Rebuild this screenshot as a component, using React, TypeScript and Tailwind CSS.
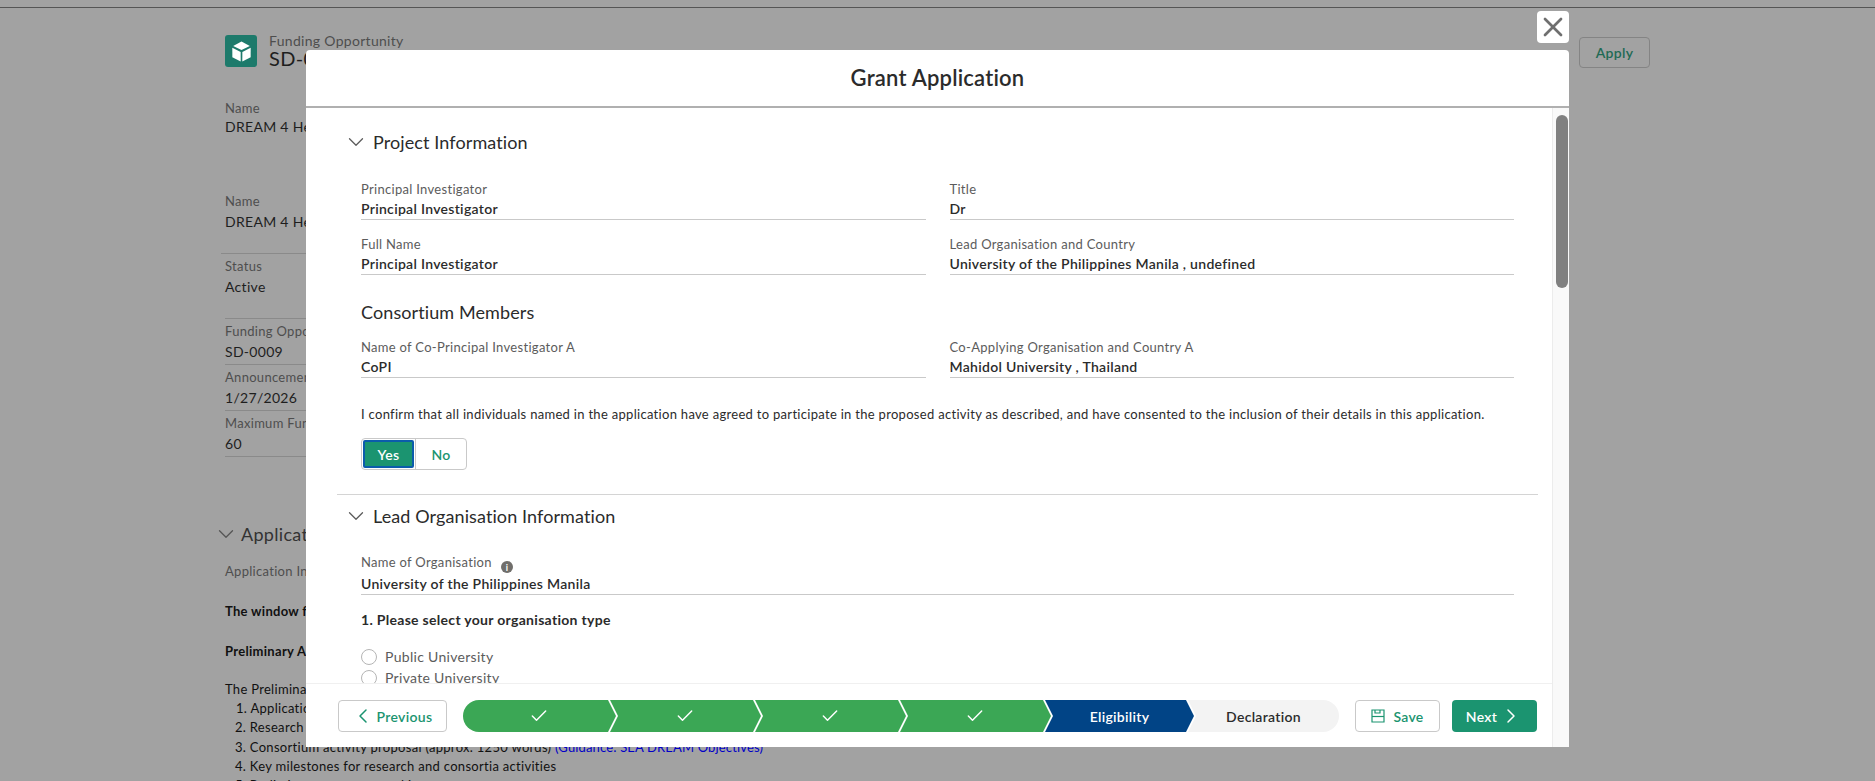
import { Check, ChevronDown, ChevronLeft, ChevronRight, X } from "lucide-react";

const font = "font-['Lato','Liberation_Sans',sans-serif]";

const stepNotch =
  "[clip-path:polygon(0_0,calc(100%-8px)_0,100%_50%,calc(100%-8px)_100%,0_100%,8px_50%)]";

function BgField({ label, value, className }: { label: string; value: string; className: string }) {
  return (
    <div className={`w-[400px] border-b border-[#8a8a8a] pt-[4px] ${className}`}>
      <div className="text-[13px] leading-[16px] text-[#4e4e4e]">{label}</div>
      <div className="mt-[3px] text-[14px] leading-[20px] text-[#1e1e1e]">{value}</div>
    </div>
  );
}

function Background() {
  return (
    <div className="pl-[225px] text-[#1e1e1e]">
      <div className="flex w-[1425px] items-start justify-between pt-[27px]">
        <div className="flex">
          <div className="flex h-[32px] w-[32px] items-center justify-center rounded-[3px] bg-[#1d7a6b]">
            <CubeIcon />
          </div>
          <div className="ml-[12px] -mt-[1px]">
            <div className="text-[14px] leading-[13px] text-[#4e4e4e]">Funding Opportunity</div>
            <div className="text-[20px] leading-[22px]">SD-0009</div>
          </div>
        </div>
        <button className="mt-[2px] h-[31px] w-[71px] rounded-[4px] border border-[#848484] text-[14px] font-semibold text-[#1f6a54]">
          Apply
        </button>
      </div>
      <div className="mt-[31px] text-[13px] leading-[16px] text-[#4e4e4e]">Name</div>
      <div className="mt-[1px] text-[14px] leading-[20px]">DREAM 4 Health</div>
      <div className="mt-[56px] text-[13px] leading-[16px] text-[#4e4e4e]">Name</div>
      <div className="mt-[3px] text-[14px] leading-[20px]">DREAM 4 Health</div>
      <div className="-ml-[4px] mt-[21px] w-[400px] border-t border-[#8a8a8a]" />
      <BgField label="Status" value="Active" className="pb-[21px]" />
      <BgField label="Funding Opportunity" value="SD-0009" className="pb-[2px]" />
      <BgField label="Announcement Date" value="1/27/2026" className="pb-[2px]" />
      <BgField label="Maximum Funding" value="60" className="pb-[2px]" />
      <div className="-ml-[12px] mt-[64px] flex items-center text-[18px] leading-[24px] text-[#333]">
        <ChevronDown className="h-[26px] w-[26px] shrink-0 text-[#555]" strokeWidth={1.2} />
        <span className="ml-[2px]">Application Details</span>
      </div>
      <div className="mt-[16px] text-[13px] leading-[16px] text-[#4e4e4e]">Application Instructions</div>
      <div className="mt-[22px] text-[13px] font-bold leading-[20px] text-[#111]">The window for applications</div>
      <div className="mt-[20px] text-[13px] font-bold leading-[20px] text-[#111]">Preliminary Application</div>
      <div className="mt-[18px] text-[13px] leading-[20px] text-[#111]">The Preliminary Application</div>
      <ol className="text-[13px] leading-[19.3px] text-[#111]">
        <li className="pl-[11px]">1. Application form</li>
        <li className="pl-[10px]">2. Research proposal</li>
        <li className="pl-[10px]">
          3. Consortium activity proposal (approx. 1250 words){" "}
          <span className="tracking-[0.15px] text-[#0000c8]">(Guidance: SEA DREAM Objectives)</span>
        </li>
        <li className="pl-[10px]">4. Key milestones for research and consortia activities</li>
        <li className="pl-[10px]">5. Preliminary outcomes and impact</li>
      </ol>
    </div>
  );
}

function CubeIcon() {
  return (
    <svg viewBox="0 0 24 24" className="h-[25px] w-[25px]" fill="#fff">
      <path d="M12 2.5 20 6.6 12 10.6 4 6.6Z" />
      <path d="M3.2 8.4 11.2 12.4V21.5L3.2 17.4Z" />
      <path d="M20.8 8.4 12.8 12.4V21.5L20.8 17.4Z" />
    </svg>
  );
}

function Field({ label, value, info }: { label: string; value: string; info?: boolean }) {
  return (
    <div className="border-b border-[#c9c9c9]">
      <div className={`flex text-[13px] leading-[16px] text-[#5c5c5c] ${info ? "h-[18px]" : ""}`}>
        {label}
        {info && (
          <span className="ml-[9px] mt-[7px] flex h-[12px] w-[12px] items-center justify-center rounded-full bg-[#706e6b] text-[9px] font-bold leading-none tracking-normal text-white">
            i
          </span>
        )}
      </div>
      <div className="whitespace-pre pt-[2px] text-[14px] font-semibold leading-[20px] text-[#2b2b2b]">{value}</div>
    </div>
  );
}

function SectionTitle({ children }: { children: string }) {
  return (
    <div className="flex h-[24px] items-center">
      <ChevronDown className="ml-[6px] h-[26px] w-[26px] shrink-0 text-[#5c5c5c]" strokeWidth={1.2} />
      <span className="ml-[4px] text-[18px] leading-[24px] tracking-[0.1px] text-[#2b2b2b]">{children}</span>
    </div>
  );
}

function Radio({ label }: { label: string }) {
  return (
    <div className="flex h-[21px] items-start">
      <span className="h-[16px] w-[16px] rounded-full border border-[#b5b5b5] bg-white" />
      <span className="ml-[8px] text-[14px] leading-[16px] text-[#5c5c5c]">{label}</span>
    </div>
  );
}

function Stepper() {
  return (
    <div className="flex h-[32px] w-[876px]">
      <div className="flex w-[153px] items-center justify-center rounded-l-full bg-[#3ba755] [clip-path:polygon(0_0,calc(100%-8px)_0,100%_50%,calc(100%-8px)_100%,0_100%)]">
        <Check className="-ml-[2px] h-[20px] w-[20px] text-white" strokeWidth={1.75} />
      </div>
      {[0, 1, 2].map((i) => (
        <div key={i} className={`-ml-[6px] flex w-[151px] items-center justify-center bg-[#3ba755] ${stepNotch}`}>
          <Check className="-ml-[2px] h-[20px] w-[20px] text-white" strokeWidth={1.75} />
        </div>
      ))}
      <div className={`-ml-[6px] flex w-[149px] items-center justify-center bg-[#014486] text-[14px] font-semibold text-white ${stepNotch}`}>
        Eligibility
      </div>
      <div className="-ml-[6px] flex flex-1 items-center justify-center rounded-r-full bg-[#f3f3f3] text-[14px] font-semibold text-[#2b2b2b] [clip-path:polygon(0_0,100%_0,100%_100%,0_100%,8px_50%)]">
        Declaration
      </div>
    </div>
  );
}

function Footer() {
  return (
    <div className="flex h-[64px] items-start border-t border-[#f0f0f0] pl-[32px] pt-[16px]">
      <button className="flex h-[32px] w-[109px] items-center justify-center rounded-[4px] border border-[#c9c9c9] text-[14px] font-semibold text-[#1b9470]">
        <ChevronLeft className="-ml-[2px] h-[24px] w-[24px] shrink-0" strokeWidth={1.5} />
        <span className="ml-[2px]">Previous</span>
      </button>
      <div className="ml-[16px]">
        <Stepper />
      </div>
      <button className="ml-[16px] flex h-[32px] w-[85px] items-center justify-center rounded-[4px] border border-[#c9c9c9] text-[14px] font-semibold text-[#1b9470]">
        <svg viewBox="0 0 14 14" className="h-[14px] w-[14px]" fill="none" stroke="currentColor" strokeWidth="1.2">
          <path d="M1 1h12v12H1z" />
          <path d="M1 7.5h12" />
          <path d="M4 1v3h5V1" />
        </svg>
        <span className="ml-[8px]">Save</span>
      </button>
      <button className="ml-[12px] flex h-[32px] w-[85px] items-center justify-center rounded-[4px] bg-[#1b9470] text-[14px] font-semibold text-white">
        <span>Next</span>
        <ChevronRight className="ml-[2px] h-[24px] w-[24px] shrink-0" strokeWidth={1.5} />
      </button>
    </div>
  );
}

function Modal() {
  return (
    <div className="absolute left-[306px] top-[50px] flex h-[697px] w-[1263px] flex-col rounded-t-[4px] bg-white">
      <div className="flex h-[58px] items-center justify-center border-b-2 border-[#b0b0b0] pb-[1px] text-[22px] font-semibold tracking-[0.2px] text-[#2b2b2b]">
        Grant Application
      </div>
      <div className="flex min-h-0 flex-1">
        <div className="flex min-w-0 flex-1 flex-col">
          <div className="h-[575px] overflow-hidden pl-[31px] pr-[14px]">
            <div className="pt-[22px]">
              <SectionTitle>Project Information</SectionTitle>
              <div className="px-[24px]">
                <div className="mt-[27px] grid grid-cols-2 gap-x-[24px] gap-y-[16px]">
                  <Field label="Principal Investigator" value="Principal Investigator" />
                  <Field label="Title" value="Dr" />
                  <Field label="Full Name" value="Principal Investigator" />
                  <Field label="Lead Organisation and Country" value="University of the Philippines Manila , undefined" />
                </div>
                <div className="mt-[25px] text-[18px] leading-[24px] tracking-[0.1px] text-[#2b2b2b]">Consortium Members</div>
                <div className="mt-[15px] grid grid-cols-2 gap-x-[24px]">
                  <Field label="Name of Co-Principal Investigator A" value="CoPI" />
                  <Field label="Co-Applying Organisation and Country A" value="Mahidol University , Thailand" />
                </div>
                <div className="mt-[27px] text-[13px] leading-[18px] text-[#2b2b2b]">
                  I confirm that all individuals named in the application have agreed to participate in the proposed activity as described, and have consented to the inclusion of their details in this application.
                </div>
                <div className="mt-[15px] flex h-[32px] w-[106px] items-center rounded-[4px] border border-[#c9c9c9] text-[14px] font-semibold">
                  <span className="ml-[1px] flex h-[28px] w-[51px] items-center justify-center rounded-[2px] border-2 border-[#0b5cab] bg-[#1b9470] text-white">
                    Yes
                  </span>
                  <span className="ml-[1px] flex h-full flex-1 items-center justify-center border-l border-[#c9c9c9] text-[#1b9470]">
                    No
                  </span>
                </div>
              </div>
            </div>
            <div className="mt-[24px] border-t border-[#d4d4d4] pt-[9px]">
              <SectionTitle>Lead Organisation Information</SectionTitle>
              <div className="px-[24px]">
                <div className="mt-[26px]">
                  <Field label="Name of Organisation" value="University of the Philippines Manila" info />
                </div>
                <div className="mt-[15px] text-[14px] font-bold leading-[20px] text-[#2b2b2b]">
                  1. Please select your organisation type
                </div>
                <div className="mt-[19px]">
                  <Radio label="Public University" />
                  <Radio label="Private University" />
                </div>
              </div>
            </div>
          </div>
          <Footer />
        </div>
        <div className="w-[17px] shrink-0 border-l border-[#ececec] bg-[#f9f9f9] pl-[3px] pt-[7px]">
          <div className="h-[173px] w-[12px] rounded-full bg-[#808080]" />
        </div>
      </div>
    </div>
  );
}

export default function App() {
  return (
    <div className={`relative h-[781px] w-full overflow-hidden bg-[#a2a2a2] tracking-[0.3px] ${font}`}>
      <div className="h-[8px] border-b border-[#555]" />
      <Background />
      <Modal />
      <button className="absolute left-[1537px] top-[11px] flex h-[32px] w-[32px] items-center justify-center rounded-[4px] bg-white text-[#6f6f6f]">
        <X className="h-[32px] w-[32px] shrink-0" strokeWidth={2} />
      </button>
    </div>
  );
}
